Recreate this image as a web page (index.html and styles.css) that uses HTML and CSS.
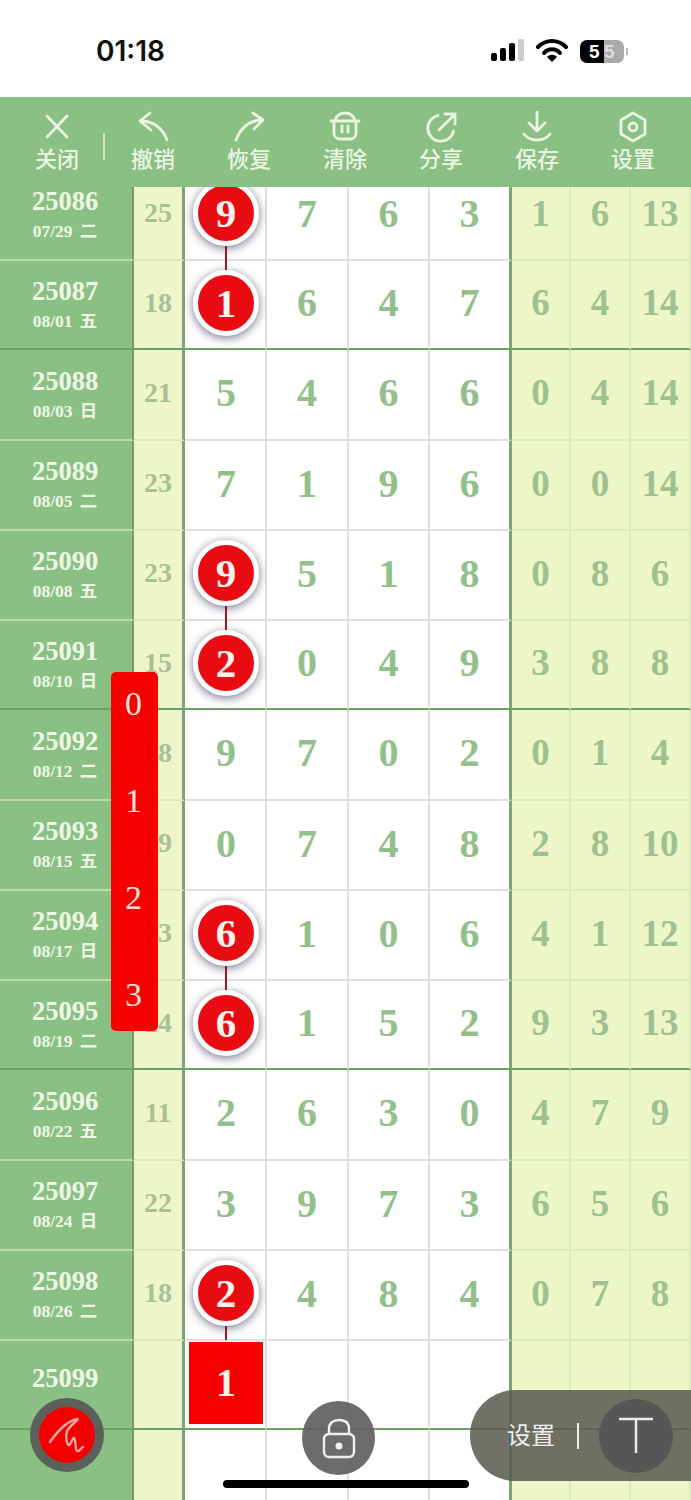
FILE: index.html
```html
<!DOCTYPE html>
<html lang="en">
<head>
    <meta charset="UTF-8">
    <meta name="viewport" content="width=device-width, initial-scale=1.0">
    <title>走势图</title>
    <link rel="stylesheet" href="styles.css">
</head>
<body>
<div class="phone">
    <div class="status-bar">
        <span class="time">01:18</span>
        <div class="status-icons">
            <svg class="signal" width="34" height="24" viewBox="0 0 34 24">
                <rect x="0" y="14" width="6" height="8" rx="2" fill="#000"/>
                <rect x="9" y="9" width="6" height="13" rx="2" fill="#000"/>
                <rect x="18" y="4" width="6" height="18" rx="2" fill="#000"/>
                <rect x="27" y="0" width="6" height="22" rx="2" fill="#ccc"/>
            </svg>
            <svg class="wifi" width="32" height="24" viewBox="0 0 32 24">
                <path d="M2 8 C10 0 22 0 30 8" fill="none" stroke="#000" stroke-width="4" stroke-linecap="round"/>
                <path d="M8 14 C12 9 20 9 24 14" fill="none" stroke="#000" stroke-width="4" stroke-linecap="round"/>
                <path d="M11 18 C14 15 18 15 21 18 L16 23 Z" fill="#000"/>
            </svg>
            <div class="battery"><span class="battery-fill">5</span><span class="battery-rest">5</span></div>
            <span class="battery-tip"></span>
        </div>
    </div>

    <div class="toolbar">
        <div class="tool">
            <svg width="32" height="32" viewBox="0 0 32 32"><path d="M6 5 L26 26 M26 5 L6 26"/></svg>
            <span>关闭</span>
        </div>
        <div class="tool">
            <svg width="32" height="32" viewBox="0 0 32 32"><path d="M13 2 L3 10 L14 19 M3 10 C16 10 25 16 30 29"/></svg>
            <span>撤销</span>
        </div>
        <div class="tool">
            <svg width="32" height="32" viewBox="0 0 32 32"><path d="M20 2 L30 9 L21 18 M30 9 C17 9 8 16 3 29"/></svg>
            <span>恢复</span>
        </div>
        <div class="tool">
            <svg width="32" height="32" viewBox="0 0 32 32"><path d="M6 9 C8 4 12 2 16 2 C20 2 24 4 26 9 M2 10 H30 M5 10 V22 C5 26 8 28 11 28 H21 C24 28 27 26 27 22 V10 M13 15 V21 M19 15 V21"/></svg>
            <span>清除</span>
        </div>
        <div class="tool">
            <svg width="32" height="32" viewBox="0 0 32 32"><path d="M13 4.5 A13 13 0 1 0 28.5 20 M14 19 L29 4 M20 3 H30 V13"/></svg>
            <span>分享</span>
        </div>
        <div class="tool">
            <svg width="32" height="32" viewBox="0 0 32 32"><path d="M16 1 V19 M8 12 L16 20 L24 12 M3 23 C9 31 23 31 29 23"/></svg>
            <span>保存</span>
        </div>
        <div class="tool">
            <svg width="32" height="32" viewBox="0 0 32 32"><path d="M16 2 L28 9 V23 L16 30 L4 23 V9 Z"/><circle cx="16" cy="16" r="4"/></svg>
            <span>设置</span>
        </div>
    </div>

    <div class="chart">
        <div class="rows">
            <div class="row"><div class="c-issue"><b>25086</b><small>07/29 二</small></div><div class="c-sum">25</div><div class="c-num link"><span class="ball">9</span></div><div class="c-num">7</div><div class="c-num">6</div><div class="c-num last">3</div><div class="c-side">1</div><div class="c-side">6</div><div class="c-side">13</div></div>
            <div class="row thick"><div class="c-issue"><b>25087</b><small>08/01 五</small></div><div class="c-sum">18</div><div class="c-num"><span class="ball">1</span></div><div class="c-num">6</div><div class="c-num">4</div><div class="c-num last">7</div><div class="c-side">6</div><div class="c-side">4</div><div class="c-side">14</div></div>
            <div class="row"><div class="c-issue"><b>25088</b><small>08/03 日</small></div><div class="c-sum">21</div><div class="c-num">5</div><div class="c-num">4</div><div class="c-num">6</div><div class="c-num last">6</div><div class="c-side">0</div><div class="c-side">4</div><div class="c-side">14</div></div>
            <div class="row"><div class="c-issue"><b>25089</b><small>08/05 二</small></div><div class="c-sum">23</div><div class="c-num">7</div><div class="c-num">1</div><div class="c-num">9</div><div class="c-num last">6</div><div class="c-side">0</div><div class="c-side">0</div><div class="c-side">14</div></div>
            <div class="row"><div class="c-issue"><b>25090</b><small>08/08 五</small></div><div class="c-sum">23</div><div class="c-num link"><span class="ball">9</span></div><div class="c-num">5</div><div class="c-num">1</div><div class="c-num last">8</div><div class="c-side">0</div><div class="c-side">8</div><div class="c-side">6</div></div>
            <div class="row thick"><div class="c-issue"><b>25091</b><small>08/10 日</small></div><div class="c-sum">15</div><div class="c-num"><span class="ball">2</span></div><div class="c-num">0</div><div class="c-num">4</div><div class="c-num last">9</div><div class="c-side">3</div><div class="c-side">8</div><div class="c-side">8</div></div>
            <div class="row"><div class="c-issue"><b>25092</b><small>08/12 二</small></div><div class="c-sum">18</div><div class="c-num">9</div><div class="c-num">7</div><div class="c-num">0</div><div class="c-num last">2</div><div class="c-side">0</div><div class="c-side">1</div><div class="c-side">4</div></div>
            <div class="row"><div class="c-issue"><b>25093</b><small>08/15 五</small></div><div class="c-sum">19</div><div class="c-num">0</div><div class="c-num">7</div><div class="c-num">4</div><div class="c-num last">8</div><div class="c-side">2</div><div class="c-side">8</div><div class="c-side">10</div></div>
            <div class="row"><div class="c-issue"><b>25094</b><small>08/17 日</small></div><div class="c-sum">13</div><div class="c-num link"><span class="ball">6</span></div><div class="c-num">1</div><div class="c-num">0</div><div class="c-num last">6</div><div class="c-side">4</div><div class="c-side">1</div><div class="c-side">12</div></div>
            <div class="row thick"><div class="c-issue"><b>25095</b><small>08/19 二</small></div><div class="c-sum">14</div><div class="c-num"><span class="ball">6</span></div><div class="c-num">1</div><div class="c-num">5</div><div class="c-num last">2</div><div class="c-side">9</div><div class="c-side">3</div><div class="c-side">13</div></div>
            <div class="row"><div class="c-issue"><b>25096</b><small>08/22 五</small></div><div class="c-sum">11</div><div class="c-num">2</div><div class="c-num">6</div><div class="c-num">3</div><div class="c-num last">0</div><div class="c-side">4</div><div class="c-side">7</div><div class="c-side">9</div></div>
            <div class="row"><div class="c-issue"><b>25097</b><small>08/24 日</small></div><div class="c-sum">22</div><div class="c-num">3</div><div class="c-num">9</div><div class="c-num">7</div><div class="c-num last">3</div><div class="c-side">6</div><div class="c-side">5</div><div class="c-side">6</div></div>
            <div class="row"><div class="c-issue"><b>25098</b><small>08/26 二</small></div><div class="c-sum">18</div><div class="c-num link link-square"><span class="ball">2</span></div><div class="c-num">4</div><div class="c-num">8</div><div class="c-num last">4</div><div class="c-side">0</div><div class="c-side">7</div><div class="c-side">8</div></div>
            <div class="row thick"><div class="c-issue c-next"><b>25099</b></div><div class="c-sum"></div><div class="c-num"><span class="pick">1</span></div><div class="c-num"></div><div class="c-num"></div><div class="c-num last"></div><div class="c-side"></div><div class="c-side"></div><div class="c-side"></div></div>
            <div class="row"><div class="c-issue"></div><div class="c-sum"></div><div class="c-num"></div><div class="c-num"></div><div class="c-num"></div><div class="c-num last"></div><div class="c-side"></div><div class="c-side"></div><div class="c-side"></div></div>
        </div>

        <div class="picker">
            <span>0</span>
            <span>1</span>
            <span>2</span>
            <span>3</span>
        </div>

        <div class="pen-btn">
            <div class="pen-inner">
                <svg width="40" height="40" viewBox="0 0 40 40"><path d="M3 27 C10 17 20 6 30 4 C33 4 24 9 20 16 C18 22 20 30 22 30 C24 30 25 23 27 23 C29 24 28 35 30 36 C32 37 34 33 36 32"/></svg>
            </div>
        </div>

        <div class="lock-btn">
            <svg width="34" height="41" viewBox="0 0 34 41"><path d="M7 16 V11 C7 5 11 2 17 2 C23 2 27 5 27 11 V16"/><rect x="2" y="16" width="30" height="23" rx="5"/><circle class="lock-dot" cx="17" cy="28" r="3.5"/></svg>
        </div>

        <div class="text-pill">
            <span class="pill-label">设置</span>
            <span class="pill-sep"></span>
            <div class="pill-btn">
                <svg width="40" height="40" viewBox="0 0 40 40"><path d="M3 3 H37 M20 3 V37"/></svg>
            </div>
        </div>

        <div class="home-bar"></div>
    </div>
</div>
</body>
</html>
```

FILE: styles.css
```css
* {
    box-sizing: border-box;
}

body {
    margin: 0;
    background-color: #fff;
    font-family: "Liberation Serif", "Noto Sans CJK SC", serif;
}

.phone {
    width: 691px;
    height: 1500px;
    overflow: hidden;
    position: relative;
}

/* status bar */
.status-bar {
    height: 97px;
    display: flex;
    align-items: center;
    justify-content: space-between;
    padding: 5px 63px 0 96px;
    background-color: #fff;
}

.time {
    font-family: Inter, "Liberation Sans", sans-serif;
    font-size: 28px;
    font-weight: 600;
    color: #111;
}

.status-icons {
    display: flex;
    align-items: center;
}

.signal {
    margin-right: 11px;
}

.wifi {
    margin-right: 12px;
}

.battery {
    width: 44px;
    height: 23px;
    border-radius: 7px;
    overflow: hidden;
    display: flex;
    font-family: "Liberation Sans", sans-serif;
    font-size: 19px;
    font-weight: 700;
    line-height: 23px;
}

.battery-fill {
    width: 24px;
    padding-left: 9px;
    background-color: #000;
    color: #fff;
}

.battery-rest {
    flex: 1;
    background-color: #aaa;
    color: #ddd;
}

.battery-tip {
    width: 2px;
    height: 7px;
    margin-left: 2px;
    background-color: #bbb;
}

/* toolbar */
.toolbar {
    height: 90px;
    display: flex;
    padding: 14px 10px 0 9px;
    background-color: #8bc084;
    position: relative;
    z-index: 2;
}

.tool {
    width: 96px;
    display: flex;
    flex-direction: column;
    align-items: center;
    color: #eaf5e0;
    font-family: "Noto Sans CJK SC", sans-serif;
    font-size: 22px;
    font-weight: 500;
    line-height: 28px;
    position: relative;
}

.tool svg {
    flex: none;
    fill: none;
    stroke: #eaf5e0;
    stroke-width: 2.8;
    stroke-linecap: round;
    stroke-linejoin: round;
}

.tool:first-child::after {
    content: "";
    position: absolute;
    right: 0;
    top: 22px;
    width: 2px;
    height: 27px;
    background-color: #cfe5c4;
}

/* chart */
.chart {
    height: 1313px;
    overflow: hidden;
    position: relative;
}

.rows {
    margin-top: -16px;
}

.row {
    height: 90px;
    display: grid;
    grid-template-columns: 134px 51px 82px 82px 81px 82px 59px 60px 60px;
}

.row.thick {
    height: 89px;
}

.row.thick + .row {
    height: 91px;
}

.row > div {
    display: flex;
    align-items: center;
    justify-content: center;
    padding-bottom: 4px;
}

.row > div:nth-child(3) {
    padding-left: 2px;
}

.row > .c-issue {
    flex-direction: column;
    background-color: #8bc084;
    border-right: 2px solid #6f9e68;
    border-bottom: 2px solid #b9dbae;
    color: #eff8e4;
    padding: 4px 2px 0 0;
}

.c-issue b {
    font-size: 26.5px;
    line-height: 26px;
}

.c-issue small {
    margin-top: 3px;
    font-size: 17.5px;
    font-weight: 700;
    line-height: 29px;
    word-spacing: 3px;
}

.row > .c-next {
    padding-bottom: 18px;
}

.c-sum {
    background-color: #eef5cb;
    border-right: 3px solid #7ba574;
    border-bottom: 2px solid #dfe9bd;
    color: #a9c095;
    font-size: 28px;
    font-weight: 700;
}

.c-num {
    background-color: #fff;
    border-right: 2px solid #e0e0e0;
    border-bottom: 2px solid #e0e0e0;
    color: #93bf8a;
    font-size: 40px;
    font-weight: 700;
    position: relative;
}

.c-num.last {
    border-right: 3px solid #7ba574;
}

.c-side {
    background-color: #edf6c7;
    border-right: 2px solid #dcebb8;
    border-bottom: 2px solid #dcebb8;
    color: #9fc08f;
    font-size: 37px;
    font-weight: 700;
}

.row.thick > div {
    border-bottom: 2px solid #6f9e68;
}

.ball {
    width: 66px;
    height: 66px;
    border: 5px solid #fff;
    border-radius: 50%;
    display: flex;
    align-items: center;
    justify-content: center;
    background-color: #e80c12;
    box-shadow: 0 2px 10px rgba(50, 60, 85, 0.7);
    color: #fdf3ec;
    font-size: 41px;
    font-weight: 700;
    position: relative;
    z-index: 1;
}

/* line joining two balls in a row after the other */
.link {
    z-index: 1;
}

.link::after {
    content: "";
    position: absolute;
    left: 40px;
    bottom: -13px;
    width: 2px;
    height: 26px;
    background-color: #a81224;
}

.link-square::after {
    bottom: -1px;
    height: 15px;
}

.pick {
    width: 74px;
    height: 82px;
    display: flex;
    align-items: center;
    justify-content: center;
    background-color: #f80000;
    color: #fff3ea;
    font-size: 40px;
    font-weight: 700;
    position: relative;
    z-index: 1;
}

/* floating controls */
.picker {
    position: absolute;
    left: 111px;
    top: 485px;
    width: 47px;
    height: 359px;
    padding: 8px 2px 12px 0;
    border-radius: 5px;
    background-color: #f60000;
    display: flex;
    flex-direction: column;
    justify-content: space-between;
    align-items: center;
    color: #ffe3dc;
    font-size: 34px;
    line-height: 48px;
    z-index: 3;
}

.pen-btn {
    position: absolute;
    left: 30px;
    top: 1211px;
    width: 74px;
    height: 74px;
    padding: 9px;
    border-radius: 50%;
    background-color: rgba(85, 85, 85, 0.9);
    z-index: 3;
}

.pen-inner {
    width: 56px;
    height: 56px;
    border-radius: 50%;
    background-color: #f40000;
    display: flex;
    align-items: center;
    justify-content: center;
}

.pen-inner svg {
    fill: none;
    stroke: #f8a8a0;
    stroke-width: 2.4;
    stroke-linecap: round;
    stroke-linejoin: round;
}

.lock-btn {
    position: absolute;
    left: 302px;
    top: 1214px;
    width: 73px;
    height: 74px;
    border-radius: 50%;
    background-color: rgba(95, 95, 95, 0.92);
    display: flex;
    align-items: center;
    justify-content: center;
    z-index: 3;
}

.lock-btn svg {
    fill: none;
    stroke: #f0f0f0;
    stroke-width: 2.4;
}

.lock-btn .lock-dot {
    fill: #f0f0f0;
    stroke: none;
}

.text-pill {
    position: absolute;
    left: 470px;
    top: 1203px;
    width: 221px;
    height: 91px;
    border-radius: 46px 0 0 46px;
    background-color: rgba(88, 88, 80, 0.85);
    display: flex;
    align-items: center;
    padding-left: 37px;
    z-index: 3;
}

.pill-label {
    font-family: "Noto Sans CJK SC", sans-serif;
    font-size: 24px;
    color: #eee;
    padding-bottom: 4px;
}

.pill-sep {
    width: 2px;
    height: 26px;
    margin: 0 20px 0 22px;
    background-color: #eee;
}

.pill-btn {
    width: 74px;
    height: 74px;
    border-radius: 50%;
    background-color: #565656;
    display: flex;
    align-items: center;
    justify-content: center;
}

.pill-btn svg {
    fill: none;
    stroke: #eee;
    stroke-width: 2.4;
}

.home-bar {
    position: absolute;
    left: 223px;
    top: 1293px;
    width: 246px;
    height: 8px;
    border-radius: 4px;
    background-color: #000;
    z-index: 4;
}
```
